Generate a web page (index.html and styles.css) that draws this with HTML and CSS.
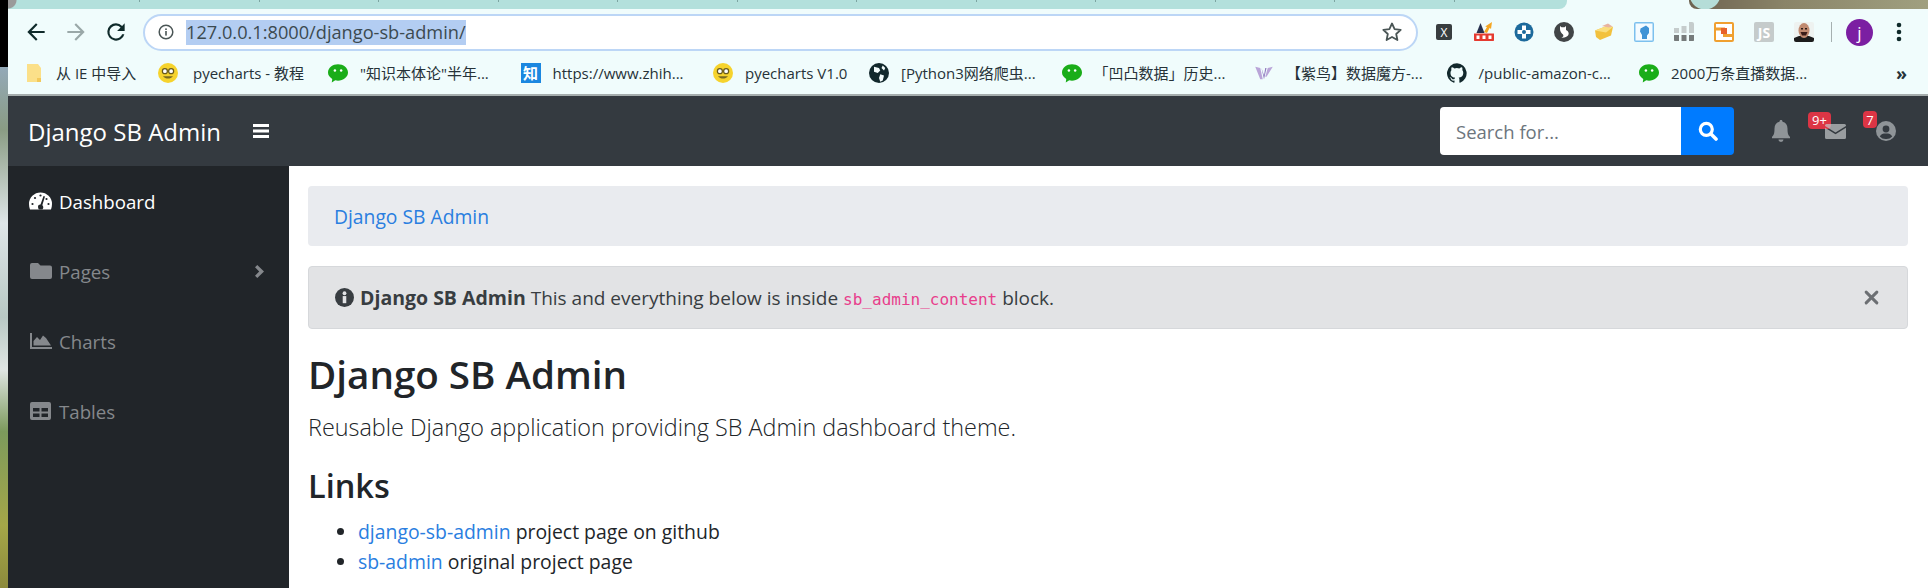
FILE: index.html
```html
<!DOCTYPE html>
<html>
<head>
  <meta charset="UTF-8">
  <title>Django SB Admin</title>
  <link rel="stylesheet" href="styles.css">
</head>
<body>
  <div class="wallpaper"></div>
  <div class="window">
    <div class="tabstrip">
      <div class="tabs">
        <span></span><span></span><span></span><span></span><span></span><span></span><span></span><span></span><span></span><span></span><span></span><span></span>
      </div>
      <div class="tab-photo"></div>
    </div>

    <div class="toolbar">
      <svg class="nav-icon" viewBox="0 0 24 24"><path d="M20 11H7.8l5.6-5.6L12 4l-8 8 8 8 1.400-1.400L7.800 13H20z" fill="#0f2a2a"/></svg>
      <svg class="nav-icon" viewBox="0 0 24 24"><path d="M4 11h12.200l-5.600-5.600L12 4l8 8-8 8-1.400-1.400 5.600-5.600H4z" fill="#9aa8a8"/></svg>
      <svg class="nav-icon" viewBox="0 0 24 24"><path d="M17.650 6.350A7.950 7.950 0 0 0 12 4a8 8 0 1 0 7.730 10h-2.080A6 6 0 1 1 12 6c1.660 0 3.140.690 4.220 1.780L13 11h7V4z" fill="#0f2a2a"/></svg>
      <div class="omnibox">
        <svg class="info-icon" viewBox="0 0 16 16"><circle cx="8" cy="8" r="6.800" fill="none" stroke="#4a5555" stroke-width="1.500"/><rect x="7.200" y="7" width="1.600" height="4.600" fill="#4a5555"/><rect x="7.200" y="4.400" width="1.600" height="1.600" fill="#4a5555"/></svg>
        <span class="url">127.0.0.1:8000/django-sb-admin/</span>
        <svg class="star-icon" viewBox="0 0 24 24"><path d="M12 3.500l2.600 5.600 6.100.7-4.500 4.200 1.200 6L12 17l-5.400 3 1.200-6-4.500-4.200 6.100-.7z" fill="none" stroke="#4a5555" stroke-width="1.800" stroke-linejoin="round"/></svg>
      </div>
      <div class="extensions">
        <span class="ext ext-x">X</span>
        <svg class="ext" viewBox="0 0 20 20"><path d="M6.500 1L10.500 11H2.500z" fill="#27304f"/><path d="M10 10l3-5-1.800-.5L18 0l-1 7-1.300-1.200L13 11z" fill="#f5a623"/><rect x="0" y="11.500" width="20" height="7.500" fill="#e53a30"/><rect x="2.500" y="13.500" width="3" height="3.500" fill="#fff"/><rect x="8.500" y="13.500" width="3" height="3.500" fill="#fff"/><rect x="14.500" y="13.500" width="3" height="3.500" fill="#fff"/></svg>
        <svg class="ext" viewBox="0 0 20 20"><circle cx="10" cy="10" r="9.500" fill="#1d6a9c"/><path d="M8 3.500h4v4.500h4.500v4H12v4.500H8V12H3.500V8H8z" fill="#fff"/><circle cx="10" cy="10" r="2" fill="#1d6a9c"/></svg>
        <svg class="ext" viewBox="0 0 20 20"><circle cx="10" cy="10" r="10" fill="#414547"/><path d="M6 4l1.500 1.200h3L12 4v4c2.500 1 3.500 3.500 2 5.500-1 1.500-4 2.500-7 2 2 0 3-1.500 2-3-1.500-1-3-3-3-5.500z" fill="#fff"/></svg>
        <svg class="ext" viewBox="0 0 20 20"><path d="M1 8.500l13-5 5 1.500-2 8.500L6 18l-4-3z" fill="#f2c13d"/><path d="M1 8.500l11 2 7-5.500-5-1.500z" fill="#f9de7e"/><path d="M8 4l6-2.500 4.500 3-4 1z" fill="#e8b4a0"/></svg>
        <svg class="ext" viewBox="0 0 20 20"><rect x=".75" y=".75" width="18.500" height="18.500" fill="#f4fbff" stroke="#7cc0ee" stroke-width="1.500"/><path d="M6.500 6.500L12 3.500l3 2.500v5l-2 2.500v3.500H8v-4L6 9.500z" fill="#3f93d6"/></svg>
        <svg class="ext" viewBox="0 0 20 20"><g fill="#c5cccc"><rect x="0" y="6" width="5" height="5"/><rect x="7.500" y="4" width="5" height="7"/><rect x="15" y="0" width="5" height="11"/></g><g fill="#767b7b"><rect x="0" y="13" width="5" height="6"/><rect x="7.500" y="13" width="5" height="6"/><rect x="15" y="13" width="5" height="6"/></g></svg>
        <svg class="ext" viewBox="0 0 20 20"><rect x="1" y="1" width="18" height="18" fill="#fff" stroke="#f0a030" stroke-width="2"/><rect x="1" y="5.500" width="10" height="3" fill="#f0a030"/><rect x="9" y="12" width="10" height="3" fill="#f0a030"/><rect x="7" y="6" width="6" height="6" fill="#e8622a"/></svg>
        <span class="ext ext-js">JS</span>
        <svg class="ext" viewBox="0 0 20 20"><rect width="20" height="20" fill="#eef2f0"/><path d="M0 20v-4l5-2h10l5 2v4z" fill="#1c1c1c"/><ellipse cx="10" cy="8.500" rx="5.500" ry="7.500" fill="#c08a70"/><path d="M6.500 10h7l-1.500 3.500H8z" fill="#3a1c18"/><rect x="7" y="6" width="2" height="1.500" fill="#2c1c18"/><rect x="11" y="6" width="2" height="1.500" fill="#2c1c18"/></svg>
      </div>
      <span class="toolbar-sep"></span>
      <span class="avatar">j</span>
      <svg class="menu-icon" viewBox="0 0 6 20"><circle cx="3" cy="3" r="2.300" fill="#0f2a2a"/><circle cx="3" cy="10" r="2.300" fill="#0f2a2a"/><circle cx="3" cy="17" r="2.300" fill="#0f2a2a"/></svg>
    </div>

    <div class="bookmarks">
      <a class="bm bm-first"><svg class="bm-icon" viewBox="0 0 20 20"><path d="M3 1h11l3 4v14H3z" fill="#fbe089"/><path d="M13 15h4v4h-4z" fill="#f3c95a"/></svg>从 IE 中导入</a>
      <a class="bm bm-second"><svg class="bm-icon" viewBox="0 0 16 16"><circle cx="8" cy="8" r="8" fill="#f6d32d"/><circle cx="5.500" cy="6.500" r="2" fill="#fff" stroke="#6a5a1a"/><circle cx="10.500" cy="6.500" r="2" fill="#fff" stroke="#6a5a1a"/><path d="M4 10.500c2 2.500 6 2.500 8 0z" fill="#7a6a20"/></svg>pyecharts - 教程</a>
      <a class="bm bm-third"><svg class="bm-icon" viewBox="0 0 16 16"><path d="M8 1c4.200 0 8 2.800 8 6.600 0 3.700-3.800 6.500-8 6.500-.8 0-1.500-.1-2.200-.3L3 15.500l.4-2.800C1.300 11.500 0 9.700 0 7.600 0 3.800 3.800 1 8 1z" fill="#1aad19"/><circle cx="5.500" cy="6" r="1" fill="#fff"/><circle cx="10.500" cy="6" r="1" fill="#fff"/></svg>"知识本体论"半年...</a>
      <a class="bm"><span class="bm-zhi">知</span>https://www.zhih...</a>
      <a class="bm bm-sixth"><svg class="bm-icon" viewBox="0 0 16 16"><circle cx="8" cy="8" r="8" fill="#f6d32d"/><circle cx="5.500" cy="6.500" r="2" fill="#fff" stroke="#6a5a1a"/><circle cx="10.500" cy="6.500" r="2" fill="#fff" stroke="#6a5a1a"/><path d="M4 10.500c2 2.500 6 2.500 8 0z" fill="#7a6a20"/></svg>pyecharts V1.0</a>
      <a class="bm"><svg class="bm-icon" viewBox="0 0 16 16"><circle cx="8" cy="8" r="8" fill="#12282c"/><path d="M4 3l4 1 1 2-2 2-3-1zM9 9l3 1-1 4-2 1-1-3zM11 2l2 2-1 2-2-2z" fill="#f2fbfb"/></svg>[Python3网络爬虫...</a>
      <a class="bm"><svg class="bm-icon" viewBox="0 0 16 16"><path d="M8 1c4.200 0 8 2.800 8 6.600 0 3.700-3.800 6.500-8 6.500-.8 0-1.500-.1-2.200-.3L3 15.500l.4-2.800C1.300 11.500 0 9.700 0 7.600 0 3.800 3.800 1 8 1z" fill="#1aad19"/><circle cx="5.500" cy="6" r="1" fill="#fff"/><circle cx="10.500" cy="6" r="1" fill="#fff"/></svg>「凹凸数据」历史...</a>
      <a class="bm"><svg class="bm-icon" viewBox="0 0 16 16"><path d="M1 3l4 1 2 9H5zM15 3l-4 1-2 7h1z" fill="#b9a4d8"/><path d="M6 4l2 6 1-6h1l-2 9z" fill="#8d76bd"/></svg>【紫鸟】数据魔方-...</a>
      <a class="bm"><svg class="bm-icon" viewBox="0 0 16 16"><path d="M8 .2a8 8 0 0 0-2.500 15.600c.4.100.5-.2.500-.4v-1.400c-2.200.5-2.700-1-2.700-1-.4-.9-.9-1.200-.9-1.200-.7-.5.100-.5.100-.5.800.1 1.200.8 1.200.8.700 1.200 1.900.9 2.300.7.100-.5.300-.9.500-1.100-1.800-.2-3.700-.9-3.700-4 0-.9.300-1.600.8-2.100-.1-.2-.4-1 .1-2.100 0 0 .7-.2 2.200.8a7.600 7.600 0 0 1 4 0c1.500-1 2.200-.8 2.200-.8.400 1.100.2 1.900.1 2.100.5.600.8 1.300.8 2.100 0 3.100-1.900 3.700-3.700 3.900.3.300.6.800.6 1.500v2.200c0 .2.100.5.600.4A8 8 0 0 0 8 .2z" fill="#12282c"/></svg>/public-amazon-c...</a>
      <a class="bm"><svg class="bm-icon" viewBox="0 0 16 16"><path d="M8 1c4.200 0 8 2.800 8 6.600 0 3.700-3.800 6.500-8 6.500-.8 0-1.500-.1-2.200-.3L3 15.500l.4-2.800C1.300 11.500 0 9.700 0 7.600 0 3.800 3.800 1 8 1z" fill="#1aad19"/><circle cx="5.500" cy="6" r="1" fill="#fff"/><circle cx="10.500" cy="6" r="1" fill="#fff"/></svg>2000万条直播数据...</a>
      <span class="bm-more">»</span>
    </div>

    <nav class="navbar">
      <a class="brand">Django SB Admin</a>
      <svg class="burger" viewBox="0 0 16 14"><path d="M0 0h16v3H0zM0 5.500h16v3H0zM0 11h16v3H0z" fill="#fff"/></svg>
      <div class="search">
        <span class="search-input">Search for...</span>
        <span class="search-btn"><svg viewBox="0 0 20 20" width="20" height="20"><circle cx="8.300" cy="8.300" r="6" fill="none" stroke="#fff" stroke-width="3.200"/><path d="M13 13l5 5" stroke="#fff" stroke-width="3.600" stroke-linecap="round"/></svg></span>
      </div>
      <div class="nav-icons">
        <span class="nav-item nav-bell">
          <svg viewBox="0 0 18 22" width="18" height="22"><path d="M9 0c1 0 1.500.7 1.500 1.700C13.600 2.400 15.500 5 15.500 8.500c0 5.500 1 6.800 2.500 8.500v1.300H0V17c1.500-1.700 2.500-3 2.500-8.500C2.500 5 4.400 2.400 7.500 1.700 7.500.7 8 0 9 0zM6.500 19.500h5a2.500 2.500 0 0 1-5 0z" fill="#8f9498"/></svg>
        </span>
        <span class="nav-item nav-mail">
          <span class="badge badge-wide">9+</span>
          <svg class="over-badge" viewBox="0 0 21 15" width="21" height="15"><path d="M0 1.500A1.500 1.500 0 0 1 1.500 0h18A1.500 1.500 0 0 1 21 1.500V2l-10.500 6.500L0 2z" fill="#c5c7c9" fill-opacity=".7"/><path d="M0 3.800l10.500 6.500L21 3.800v9.700a1.500 1.500 0 0 1-1.500 1.500h-18A1.500 1.500 0 0 1 0 13.500z" fill="#c5c7c9" fill-opacity=".7"/></svg>
        </span>
        <span class="nav-item nav-user">
          <span class="badge">7</span>
          <svg class="over-badge" viewBox="0 0 20 20" width="20" height="20"><circle cx="10" cy="10" r="10" fill="#8f9498"/><circle cx="10" cy="8" r="3.400" fill="#343a40"/><path d="M3.800 15.500C5 13 7 12.500 10 12.500s5 .5 6.200 3A8 8 0 0 1 10 18a8 8 0 0 1-6.200-2.500z" fill="#343a40"/></svg>
        </span>
      </div>
    </nav>

    <div class="wrapper">
      <ul class="sidebar">
        <li class="side-item active">
          <svg class="side-icon" viewBox="0 0 23 17"><path d="M11.500 0A11.500 11.500 0 0 1 23 11.500c0 2-.3 3.800-1 5.500H1c-.7-1.700-1-3.500-1-5.500A11.500 11.500 0 0 1 11.500 0z" fill="#fff"/><path d="M14.500 3.500l-3 8.500c-1.200-.1-2.500.7-2.500 2.300 0 1 .3 1.800.9 2.700h3.500c.8-.9 1-1.800.8-2.800-.1-.6-.5-1.100-.9-1.400L16 4z" fill="#212529"/><g fill="#212529"><circle cx="11.500" cy="3" r="1.100"/><circle cx="6" cy="5.500" r="1.100"/><circle cx="3.500" cy="11.500" r="1.100"/><circle cx="19.500" cy="11.500" r="1.100"/><circle cx="17.500" cy="6.500" r="1.100"/></g></svg>
          <span>Dashboard</span>
        </li>
        <li class="side-item">
          <svg class="side-icon" viewBox="0 0 23 16"><path d="M3 0h6l2.500 2.500H21a2 2 0 0 1 2 2V14a2 2 0 0 1-2 2H3a2 2 0 0 1-2-2V2a2 2 0 0 1 2-2z" fill="#85888c"/></svg>
          <span>Pages</span>
          <svg class="side-chevron" viewBox="0 0 9 13"><path d="M2.300 0L9 6.500 2.300 13 0 10.700l4.200-4.200L0 2.300z" fill="#85888c"/></svg>
        </li>
        <li class="side-item">
          <svg class="side-icon" viewBox="0 0 23 16"><path d="M1 0h2v14h20v2H1z" fill="#85888c"/><path d="M4.500 12.500V8L8 4l3 3 3-4.500 3 2.500 5 7.500z" fill="#85888c"/></svg>
          <span>Charts</span>
        </li>
        <li class="side-item">
          <svg class="side-icon" viewBox="0 0 23 18"><path d="M3 0h17a2 2 0 0 1 2 2v14a2 2 0 0 1-2 2H3a2 2 0 0 1-2-2V2a2 2 0 0 1 2-2zM4 6v3.500h6.500V6zm8.500 0v3.500H19V6zM4 11.500V15h6.500v-3.500zm8.500 0V15H19v-3.500z" fill="#85888c" fill-rule="evenodd"/></svg>
          <span>Tables</span>
        </li>
      </ul>

      <main class="content">
        <div class="breadcrumb"><a>Django SB Admin</a></div>
        <div class="alert">
          <svg class="alert-icon" viewBox="0 0 16 16"><circle cx="8" cy="8" r="8" fill="#383d41"/><rect x="6.500" y="6.800" width="3" height="6" fill="#e2e3e5"/><circle cx="8" cy="4.400" r="1.600" fill="#e2e3e5"/></svg>
          <span><strong>Django SB Admin</strong> This and everything below is inside <code>sb_admin_content</code> block.</span>
          <svg class="alert-close" viewBox="0 0 14 14"><path d="M2 2l10 10M12 2L2 12" stroke="#6c6f73" stroke-width="2.800" stroke-linecap="round"/></svg>
        </div>
        <h1>Django SB Admin</h1>
        <p class="lead">Reusable Django application providing SB Admin dashboard theme.</p>
        <h2>Links</h2>
        <ul class="links">
          <li><a>django-sb-admin</a> project page on github</li>
          <li><a>sb-admin</a> original project page</li>
        </ul>
      </main>
    </div>
  </div>
</body>
</html>
```

FILE: styles.css
```css
* {
  box-sizing: border-box;
}

html, body {
  height: 100%;
}

body {
  margin: 0;
  overflow: hidden;
  display: flex;
  background: #000;
  font-family: "Open Sans", "Noto Sans CJK SC", sans-serif;
  color: #212529;
}

/* strip of desktop left of the browser window */
.wallpaper {
  width: 8px;
  flex: none;
  margin-top: 67px;
  background: linear-gradient(#93a9b8 0%, #8a9c84 12%, #dfe6e8 30%, #b8c8c4 48%, #e0e6e4 58%, #7c9a5c 70%, #a5a748 88%, #8c8a3c 100%);
}

.window {
  flex: 1;
  min-width: 0;
  display: flex;
  flex-direction: column;
}

/* Browser chrome */
.tabstrip {
  height: 9px;
  flex: none;
  display: flex;
  justify-content: space-between;
  background: #f0fcfc;
}

.tabs {
  width: 1559px;
  display: flex;
  gap: 118.500px;
  padding-left: 131px;
  background: radial-gradient(circle 9px at 0 0, #9a9a9a 8px, transparent 9px), #b3e0dc;
  border-radius: 0 0 8px 0;
}

.tabs span {
  width: 1px;
  height: 2px;
  background: #7da5a2;
}

.tab-photo {
  width: 239px;
  background: radial-gradient(circle 16px at 16px -6px, #b5ddd8 0 15px, transparent 16px), linear-gradient(to right, #6d6250, #8a8468 40%, #a0a080);
  border-radius: 0 0 0 8px;
}

.toolbar {
  height: 46px;
  flex: none;
  display: flex;
  align-items: center;
  padding-left: 15px;
  background: #f0fcfc;
}

.nav-icon {
  width: 26px;
  height: 26px;
  margin-right: 14px;
  flex: none;
}

.omnibox {
  width: 1275px;
  height: 37px;
  flex: none;
  display: flex;
  align-items: center;
  padding: 0 12px 0 13px;
  background: #fff;
  border: 2px solid #bcd6f6;
  border-radius: 19px;
}

.info-icon {
  width: 16px;
  height: 16px;
  flex: none;
}

.url {
  margin-left: 12px;
  background: #b3cdf2;
  color: #3c4a50;
  font-size: 18.200px;
  line-height: 25px;
}

.star-icon {
  width: 24px;
  height: 24px;
  margin-left: auto;
}

.extensions {
  display: flex;
  align-items: center;
  gap: 20px;
  margin-left: 16px;
}

.ext {
  width: 20px;
  height: 20px;
  flex: none;
  display: flex;
  align-items: center;
  justify-content: center;
  color: #fff;
  border-radius: 2px;
}

.ext-x {
  background: #383d3f;
  font-size: 12px;
  width: 16px;
  height: 16px;
  margin: 0 2px;
}

.ext-js {
  background: #c5cbcb;
  font-size: 14px;
  font-weight: 700;
}

.toolbar-sep {
  width: 1px;
  height: 20px;
  margin-left: 17px;
  background: #a6b0b0;
}

.avatar {
  width: 27px;
  height: 27px;
  margin-left: 14px;
  flex: none;
  display: flex;
  align-items: center;
  justify-content: center;
  border-radius: 50%;
  background: #7b1fa2;
  color: #fff;
  font-size: 17px;
}

.menu-icon {
  width: 6px;
  height: 20px;
  margin-left: 23px;
}

.bookmarks {
  height: 41px;
  flex: none;
  display: flex;
  align-items: center;
  padding: 0 0 4px 16px;
  background: #f0fcfc;
  border-bottom: 2px solid #a5adad;
  font-size: 15px;
  color: #263238;
}

/* truncated bookmarks all take the same width */
.bm {
  width: 192.500px;
  flex: none;
  display: flex;
  align-items: center;
  gap: 12px;
  white-space: nowrap;
}

.bm-first {
  width: 134px;
}

.bm-second {
  width: 170px;
  gap: 15px;
}

.bm-sixth {
  width: 156px;
}

.bm-icon {
  width: 20px;
  height: 20px;
  flex: none;
}

.bm-zhi {
  width: 20px;
  height: 20px;
  display: flex;
  align-items: center;
  justify-content: center;
  background: #1b87e0;
  color: #fff;
  font-size: 15px;
  font-weight: 700;
}

.bm-more {
  margin-left: auto;
  margin-right: 21px;
  font-size: 18px;
  font-weight: 700;
}

/* Navbar */
.navbar {
  height: 70px;
  flex: none;
  display: flex;
  align-items: center;
  padding: 0 32px 0 20px;
  background: #343a40;
}

.brand {
  font-size: 24px;
  color: #fff;
}

.burger {
  width: 16px;
  height: 14px;
  margin-left: 32px;
}

.search {
  display: flex;
  margin-left: auto;
  height: 48px;
}

.search-input {
  width: 241px;
  display: flex;
  align-items: center;
  padding-left: 16px;
  background: #fff;
  border-radius: 4px 0 0 4px;
  color: #6c757d;
  font-size: 18.500px;
}

.search-btn {
  width: 53px;
  display: flex;
  align-items: center;
  justify-content: center;
  background: #007bff;
  border-radius: 0 4px 4px 0;
}

.nav-icons {
  display: flex;
  align-items: center;
  margin-left: 38px;
}

.nav-item {
  position: relative;
  display: flex;
  align-items: center;
}

.nav-mail {
  margin-left: 35px;
}

.nav-user {
  margin-left: 30px;
}

.over-badge {
  position: relative;
}

.badge {
  position: absolute;
  top: -10px;
  left: -13px;
  height: 17px;
  min-width: 14px;
  display: flex;
  align-items: center;
  justify-content: center;
  background: #dc3545;
  border-radius: 4px;
  color: #fff;
  font-size: 13px;
}

.badge-wide {
  top: -12px;
  left: -17px;
  width: 23px;
}

/* Sidebar and content */
.wrapper {
  flex: 1;
  min-height: 0;
  display: flex;
}

.sidebar {
  width: 281px;
  flex: none;
  margin: 0;
  padding: 0;
  list-style: none;
  background: #212529;
}

.side-item {
  height: 70px;
  display: flex;
  align-items: center;
  padding: 0 25px 0 21px;
  color: #85888c;
  font-size: 18.700px;
}

.side-item.active {
  color: #fff;
}

.side-icon {
  width: 23px;
  height: 18px;
  margin-right: 7px;
  flex: none;
}

.side-chevron {
  width: 9px;
  height: 13px;
  margin-left: auto;
}

.content {
  flex: 1;
  min-width: 0;
  padding: 20px 20px 0 19px;
  background: #fff;
  font-size: 19px;
}

.breadcrumb {
  height: 60px;
  display: flex;
  align-items: center;
  padding: 0 26px;
  background: #e9ebef;
  border-radius: 4px;
  font-size: 19.300px;
}

.breadcrumb a, .links a {
  color: #2a7ee0;
}

.alert {
  height: 63px;
  display: flex;
  align-items: center;
  margin-top: 20px;
  padding: 0 28px 0 26px;
  background: #e2e3e5;
  border: 1px solid #d6d8db;
  border-radius: 4px;
  color: #383d41;
}

.alert strong {
  font-size: 19.500px;
}

.alert-icon {
  width: 19px;
  height: 19px;
  margin-right: 6px;
  flex: none;
}

.alert code {
  font-family: "DejaVu Sans Mono", monospace;
  font-size: 16px;
  color: #e83e8c;
}

.alert-close {
  width: 15px;
  height: 15px;
  margin-left: auto;
}

h1 {
  margin: 21px 0 0;
  font-size: 38.600px;
  font-weight: 600;
  line-height: 48px;
}

.lead {
  margin: 13px 0 0;
  font-size: 23.400px;
  font-weight: 300;
  line-height: 32px;
}

h2 {
  margin: 24px 0 0;
  font-size: 32.500px;
  font-weight: 600;
  line-height: 38px;
}

.links {
  margin: 12px 0 0;
  padding-left: 50px;
  font-size: 19.400px;
  line-height: 30px;
}
```
